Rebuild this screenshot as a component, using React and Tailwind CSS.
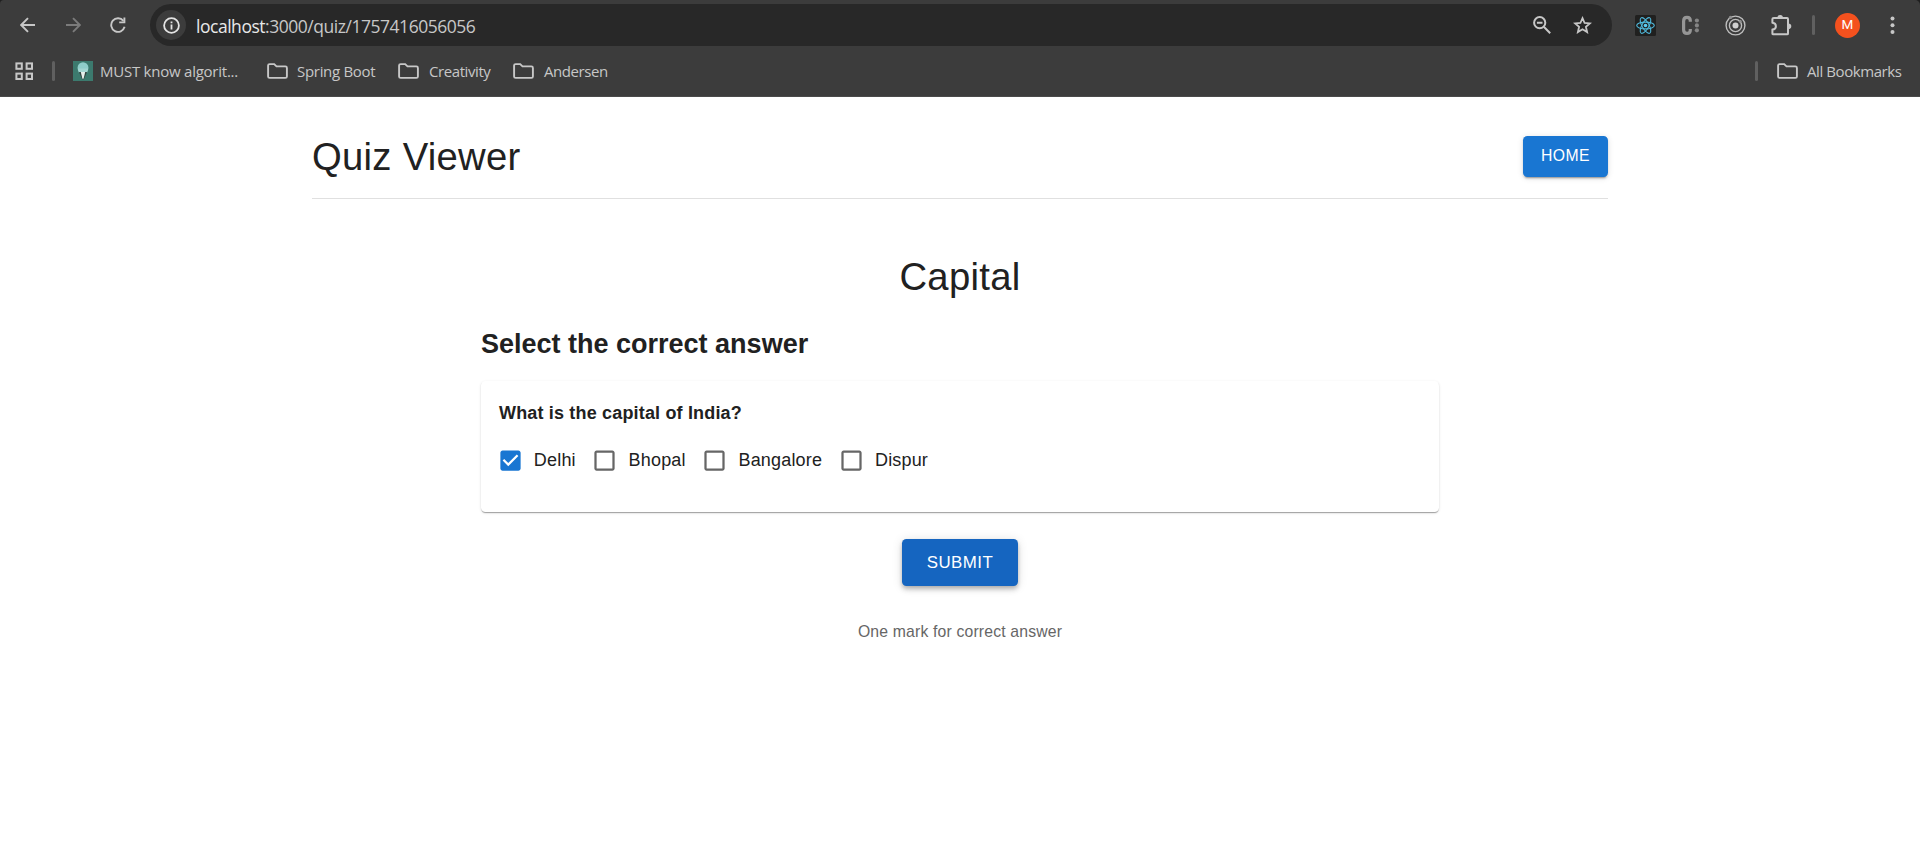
import React from "react";

const ICON = "#c7c7c7";

function Folder() {
  return (
    <svg width="21" height="16" viewBox="0 0 21 16" fill="none" className="shrink-0">
      <path d="M1.1 13.4V2.6Q1.1 1.1 2.6 1.1H7.2L9.5 3.4H18.4Q19.9 3.4 19.9 4.9V13.4Q19.9 14.9 18.4 14.9H2.6Q1.1 14.9 1.1 13.4Z" stroke={ICON} strokeWidth="1.9" />
    </svg>
  );
}

function Arrow({ color, flip }) {
  return (
    <svg width="16" height="16" viewBox="0 0 16 16" fill="none" className={flip ? "shrink-0 -scale-x-100" : "shrink-0"}>
      <path d="M15 8H1.6M8 1.2L1.2 8L8 14.8" stroke={color} strokeWidth="1.9" />
    </svg>
  );
}

function Reload() {
  return (
    <svg width="16" height="16" viewBox="0 0 16 16" fill="none" className="shrink-0">
      <path d="M13.4 3.9A6.8 6.8 0 1 0 14.6 9.8" stroke={ICON} strokeWidth="1.9" />
      <path d="M14.4 0.4V5.4H9.2" stroke={ICON} strokeWidth="1.9" />
    </svg>
  );
}

function Info() {
  return (
    <svg width="17" height="17" viewBox="0 0 17 17" fill="none">
      <circle cx="8.5" cy="8.5" r="7.4" stroke="#e3e3e3" strokeWidth="1.8" />
      <path d="M8.5 7.6V12.4M8.5 4.5V6.2" stroke="#e3e3e3" strokeWidth="1.8" />
    </svg>
  );
}

function ZoomOut() {
  return (
    <svg width="18" height="18" viewBox="0 0 18 18" fill="none" className="shrink-0">
      <circle cx="6.7" cy="6.7" r="5.6" stroke={ICON} strokeWidth="2" />
      <path d="M3.9 6.7H9.5M10.8 10.8L17.2 17.2" stroke={ICON} strokeWidth="2" />
    </svg>
  );
}

function Star() {
  return (
    <svg width="19" height="18" viewBox="0 0 19 18" fill="none" className="shrink-0">
      <path d="M9.5 2.2L11.6 7L16.8 7.4L12.9 10.8L14.1 16L9.5 13.2L4.9 16L6.1 10.8L2.2 7.4L7.4 7Z" stroke={ICON} strokeWidth="1.8" />
    </svg>
  );
}

function ReactLogo() {
  return (
    <svg width="21" height="21" viewBox="0 0 21 21" fill="none" className="shrink-0">
      <rect width="21" height="21" rx="1.5" fill="#20201f" />
      <g stroke="#4fb9dc" strokeWidth="1.1">
        <ellipse cx="10.5" cy="10.5" rx="8.8" ry="3.4" />
        <ellipse cx="10.5" cy="10.5" rx="8.8" ry="3.4" transform="rotate(60 10.5 10.5)" />
        <ellipse cx="10.5" cy="10.5" rx="8.8" ry="3.4" transform="rotate(120 10.5 10.5)" />
      </g>
      <circle cx="10.5" cy="10.5" r="1.8" fill="#5ccdf2" />
    </svg>
  );
}

function Colons() {
  return (
    <svg width="19" height="21" viewBox="0 0 19 21" fill="none" className="shrink-0">
      <path d="M9.3 6.8V5.6Q9.3 2.4 6 2.4Q2.6 2.4 2.6 6.2V14.8Q2.6 18.4 6 18.4Q9.3 18.4 9.3 15.2V14" stroke="#969696" strokeWidth="3.2" />
      <circle cx="15.9" cy="5.5" r="2.1" fill="#858585" />
      <circle cx="15.9" cy="10.4" r="2.1" fill="#858585" />
      <circle cx="15.9" cy="15.3" r="2.1" fill="#858585" />
    </svg>
  );
}

function Target() {
  return (
    <svg width="21" height="21" viewBox="0 0 21 21" fill="none" className="shrink-0">
      <circle cx="10.5" cy="10.5" r="9.4" stroke="#bdbdbd" strokeWidth="1.4" />
      <circle cx="10.5" cy="10.5" r="6.1" stroke="#bdbdbd" strokeWidth="1.4" />
      <circle cx="10.5" cy="10.5" r="3" fill="#d0d0d0" />
      <circle cx="5.5" cy="2.4" r="1.7" fill="#8e8e8e" />
      <circle cx="15.2" cy="6.2" r="1.5" fill="#8e8e8e" />
    </svg>
  );
}

function Puzzle() {
  return (
    <svg width="21" height="21" viewBox="0 0 21 21" fill="none" className="shrink-0">
      <path d="M2.8 3.1H16.1Q17 3.1 17 4V18.4Q17 19.3 16.1 19.3H2.8Q1.4 19.3 1.4 18.4V14.6Q4.9 14.2 4.9 11.2Q4.9 8.2 1.4 7.8V4Q1.4 3.1 2.8 3.1Z" stroke={ICON} strokeWidth="2" strokeLinejoin="round" />
      <path d="M6.4 3.2A2.8 3.1 0 0 1 12 3.2ZM17.2 8.5A3.1 2.8 0 0 1 17.2 14.1Z" fill={ICON} />
    </svg>
  );
}

function Dots() {
  return (
    <svg width="5" height="19" viewBox="0 0 5 19" fill={ICON} className="shrink-0">
      <circle cx="2.5" cy="2.4" r="2" />
      <circle cx="2.5" cy="9.2" r="2" />
      <circle cx="2.5" cy="16" r="2" />
    </svg>
  );
}

function Apps() {
  return (
    <svg width="19" height="18" viewBox="0 0 19 18" fill="none" stroke={ICON} strokeWidth="2" className="shrink-0">
      <rect x="1.4" y="1.4" width="5.4" height="5.4" />
      <rect x="11.6" y="1.4" width="5.4" height="5.4" />
      <rect x="1.4" y="11.6" width="5.4" height="5.4" />
      <rect x="11.6" y="11.6" width="5.4" height="5.4" />
    </svg>
  );
}

function Favicon() {
  return (
    <svg width="20" height="20" viewBox="0 0 20 20" className="shrink-0">
      <rect width="20" height="20" fill="#3c7a6e" />
      <circle cx="10" cy="6.6" r="5.4" fill="#8fcdc9" />
      <path d="M4.6 7.4H15.4L14.2 11.4H5.8Z" fill="#a3d6d2" />
      <path d="M6 11H14L10.8 18.2H9.2Z" fill="#33433f" />
      <path d="M7.8 11H12.2L10.6 17.8H9.4Z" fill="#e8efec" />
    </svg>
  );
}

function Checkbox({ checked }) {
  return (
    <svg width="27" height="27" viewBox="0 0 24 24" className="shrink-0">
      {checked ? (
        <path fill="#1976d2" d="M19 3H5c-1.11 0-2 .9-2 2v14c0 1.1.89 2 2 2h14c1.11 0 2-.9 2-2V5c0-1.1-.89-2-2-2zm-9 14l-5-5 1.41-1.41L10 14.17l7.59-7.59L19 8l-9 9z" />
      ) : (
        <path fill="#666666" d="M19 5v14H5V5h14m0-2H5c-1.1 0-2 .9-2 2v14c0 1.1.9 2 2 2h14c1.1 0 2-.9 2-2V5c0-1.1-.9-2-2-2z" />
      )}
    </svg>
  );
}

function Option({ label, checked }) {
  return (
    <label className="-ml-[12.4px] mr-[18px] flex items-center">
      <span className="p-[10.125px]">
        <Checkbox checked={checked} />
      </span>
      <span className="pb-px text-[18px] leading-[27px] tracking-[0.169px]">{label}</span>
    </label>
  );
}

function BrowserChrome() {
  return (
    <div className="bg-[#1f1f1f]">
      <header className="h-[97px] rounded-tl-[4px] rounded-tr-[5px] border-b border-[#4a4a4a] bg-[#3c3c3c] font-['Open_Sans',sans-serif] text-[#c7c7c7]">
        <div className="flex h-[50px] items-center pl-[20px]">
          <div className="flex items-center gap-[29px]">
            <Arrow color={ICON} />
            <Arrow color="#7b7b7b" flip />
            <Reload />
          </div>
          <div className="ml-[24px] flex h-[42px] w-[1462px] shrink-0 items-center rounded-full bg-[#282828] pr-[20px] pl-[6px]">
            <span className="flex h-[30px] w-[30px] items-center justify-center rounded-full bg-[#3c3c3c]">
              <Info />
            </span>
            <span className="ml-[10px] pt-px text-[17.5px] leading-[24px] tracking-[-0.47px] whitespace-nowrap">
              <span className="text-[#e8e8e8]">localhost</span>:3000/quiz/1757416056056
            </span>
            <div className="ml-auto flex items-center gap-[22px]">
              <ZoomOut />
              <Star />
            </div>
          </div>
          <div className="ml-[23px] flex items-center">
            <ReactLogo />
            <span className="ml-[25px] flex"><Colons /></span>
            <span className="ml-[25px] flex"><Target /></span>
            <span className="ml-[25px] flex"><Puzzle /></span>
            <span className="ml-[20px] h-[20px] w-[3px] rounded-full bg-[#606060]" />
            <span className="ml-[20px] flex h-[25px] w-[25px] items-center justify-center rounded-full bg-[#f4511e] font-[Roboto,sans-serif] text-[13.5px] leading-none text-white">M</span>
            <span className="ml-[30px] flex"><Dots /></span>
          </div>
        </div>
        <div className="flex h-[42px] items-center pr-[18px] pl-[15px] text-[15px] leading-[20px] tracking-[-0.42px] whitespace-nowrap">
          <Apps />
          <span className="ml-[18px] h-[20px] w-[3px] rounded-full bg-[#606060]" />
          <span className="ml-[18px] flex"><Favicon /></span>
          <span className="ml-[7px] w-[167px] pb-px tracking-[-0.24px]">MUST know algorit...</span>
          <Folder />
          <span className="ml-[9px] w-[101px] pb-px tracking-[-0.3px]">Spring Boot</span>
          <Folder />
          <span className="ml-[10px] w-[84px] pb-px">Creativity</span>
          <Folder />
          <span className="ml-[10px] pb-px">Andersen</span>
          <span className="ml-auto h-[20px] w-[3px] rounded-full bg-[#606060]" />
          <span className="ml-[19px] flex"><Folder /></span>
          <span className="ml-[9px] w-[95px] pb-px">All Bookmarks</span>
        </div>
      </header>
    </div>
  );
}

export default function App() {
  return (
    <div className="min-h-screen bg-white font-['Liberation_Sans',Arial,sans-serif] text-[#212121]">
      <BrowserChrome />
      <div className="mx-auto w-[1296px] pt-[36px]">
        <div className="flex items-center justify-between border-b border-[#e0e0e0] pb-[17.75px]">
          <h1 className="text-[38.25px] leading-[47.25px] tracking-[0.281px]">Quiz Viewer</h1>
          <button className="h-[41px] w-[85px] rounded-[4.5px] bg-[#1976d2] pb-px text-[15.75px] tracking-[0.45px] text-white shadow-[0_3px_1px_-2px_rgba(0,0,0,0.2),0_2px_2px_0_rgba(0,0,0,0.14),0_1px_6px_0_rgba(0,0,0,0.12)]">
            HOME
          </button>
        </div>
        <main className="mx-auto mt-[54px] flex w-[958px] flex-col items-center">
          <h2 className="text-[38.25px] leading-[47.25px] tracking-[0.281px]">Capital</h2>
          <h3 className="mt-[25.75px] self-start text-[27px] leading-[36px] font-bold">Select the correct answer</h3>
          <section className="mt-[19px] h-[131px] w-full rounded-[4.5px] bg-white px-[18px] pt-[17px] shadow-[0_2px_1px_-1px_rgba(0,0,0,0.2),0_1px_1px_0_rgba(0,0,0,0.14),0_1px_3px_0_rgba(0,0,0,0.12)]">
            <p className="text-[18px] leading-[31.5px] font-bold tracking-[0.169px]">What is the capital of India?</p>
            <div className="mt-[7.5px] flex">
              <Option label="Delhi" checked />
              <Option label="Bhopal" />
              <Option label="Bangalore" />
              <Option label="Dispur" />
            </div>
          </section>
          <button className="mt-[27px] h-[47px] w-[116px] rounded-[4.5px] bg-[#1565c0] text-[16.875px] tracking-[0.48px] text-white shadow-[0_2px_4px_-1px_rgba(0,0,0,0.2),0_4px_5px_0_rgba(0,0,0,0.14),0_1px_11px_0_rgba(0,0,0,0.12)]">
            SUBMIT
          </button>
          <p className="mt-[35px] text-[15.75px] leading-[22.5px] tracking-[0.169px] text-[#666666]">One mark for correct answer</p>
        </main>
      </div>
    </div>
  );
}
